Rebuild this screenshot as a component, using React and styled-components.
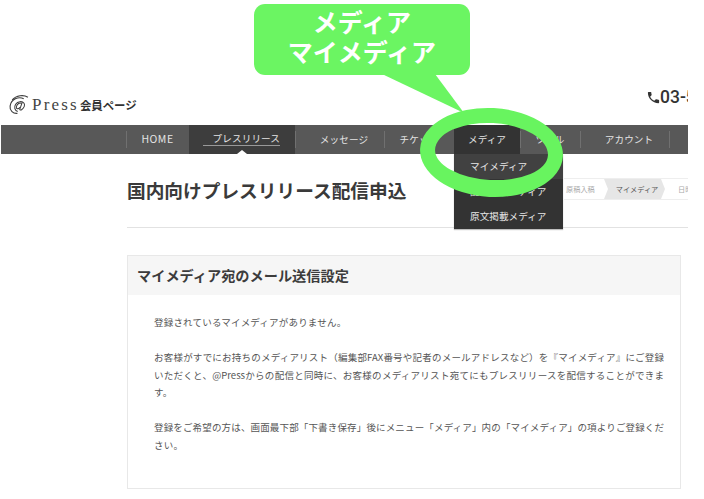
import React from 'react';
import styled, { createGlobalStyle } from 'styled-components';
import { MdLocalPhone } from 'react-icons/md';

const GlobalStyle = createGlobalStyle`
  html, body {
    margin: 0;
    padding: 0;
    background: #fff;
  }
  body {
    font-family: "Noto Sans CJK JP", "Noto Sans", sans-serif;
  }
`;

const Stage = styled.div`
  position: relative;
  width: 704px;
  height: 499px;
  overflow: hidden;
`;

const Page = styled.div`
  position: relative;
  width: 688px;
  height: 499px;
  overflow: hidden;
  padding-top: 88px;
  box-sizing: border-box;
`;

const Header = styled.header`
  height: 37px;
  display: flex;
  align-items: flex-start;
  justify-content: space-between;
  padding-left: 8px;
`;

const Logo = styled.div`
  display: flex;
  align-items: center;
  height: 34px;
`;

const LogoWord = styled.span`
  font-family: "Liberation Serif", serif;
  font-size: 17px;
  letter-spacing: 2.2px;
  color: #444;
  margin-left: 2px;
`;

const LogoNote = styled.span`
  font-size: 11.4px;
  font-weight: 700;
  color: #333;
  margin-left: 1px;
`;

const Phone = styled.div`
  display: flex;
  align-items: center;
  font-family: Roboto, sans-serif;
  font-size: 17.5px;
  font-weight: 500;
  color: #333;
  white-space: nowrap;
  width: 41px;
  flex: none;
  line-height: 18px;
`;

const PhoneIcon = styled(MdLocalPhone)`
  flex: none;
  width: 15px;
  height: 15px;
  margin: 0 -1px 0 -1px;
`;

const Nav = styled.nav`
  height: 29px;
  margin-left: 1px;
  background: #585858;
  display: flex;
  padding-left: 125px;
`;

const NavItem = styled.div`
  position: relative;
  width: ${(p) => p.$w}px;
  flex: none;
  box-sizing: border-box;
  display: flex;
  align-items: center;
  justify-content: center;
  padding: 0 0 2px ${(p) => p.$shift || 0}px;
  font-size: 9.6px;
  letter-spacing: 0.1px;
  color: #e4e4e4;
  background: ${(p) => p.$bg || 'transparent'};
  &::before {
    content: '';
    display: ${(p) => (p.$bg ? 'none' : 'block')};
    position: absolute;
    left: 0;
    top: 6px;
    bottom: 6px;
    width: 1px;
    background: #707070;
  }
`;

const HomeLabel = styled.span`
  font-size: 10.5px;
  letter-spacing: 0.5px;
`;

const ActiveLabel = styled.span`
  display: block;
  width: 77px;
  margin-right: 1px;
  text-align: right;
  border-bottom: 1px solid #999;
  line-height: 13px;
  padding-top: 1px;
`;

const Caret = styled.span`
  position: absolute;
  left: 50%;
  bottom: 0;
  margin-left: -5px;
  border: 5px solid transparent;
  border-top: 0;
  border-bottom: 4px solid #fff;
`;

const Dropdown = styled.ul`
  position: absolute;
  left: 454px;
  top: 154px;
  width: 109px;
  margin: 0;
  padding: 0;
  list-style: none;
  background: #333;
  box-shadow: 0 1px 1px rgba(0, 0, 0, 0.25);
`;

const DropItem = styled.li`
  height: 25px;
  line-height: 24px;
  padding-left: 16px;
  font-size: 9.6px;
  letter-spacing: 0.05px;
  color: #e8e8e8;
  background: ${(p) => (p.$current ? '#414141' : 'transparent')};
`;

const Main = styled.main`
  padding-left: 127px;
`;

const TitleRow = styled.div`
  height: 74px;
  box-sizing: border-box;
  border-bottom: 1px solid #e2e2e2;
  display: flex;
  align-items: flex-start;
  justify-content: space-between;
  padding-top: 23px;
`;

const Title = styled.h1`
  margin: 0;
  font-size: 18.7px;
  font-weight: 700;
  line-height: 26px;
  color: #3a3a3a;
  white-space: nowrap;
`;

const Steps = styled.div`
  display: flex;
  flex: none;
  width: 124px;
  height: 22px;
  margin-top: 1px;
  box-sizing: border-box;
  border-top: 1px solid #eee;
  border-bottom: 1px solid #eee;
  overflow: hidden;
`;

const Step = styled.div`
  flex: none;
  width: ${(p) => p.$w}px;
  box-sizing: border-box;
  padding-left: ${(p) => p.$pad || 0}px;
  font-size: 7.2px;
  line-height: 20px;
  text-align: ${(p) => (p.$on ? 'center' : 'left')};
  white-space: nowrap;
  color: ${(p) => (p.$on ? '#555' : '#aaa')};
  background: ${(p) => (p.$on ? '#e6e6e6' : 'transparent')};
  clip-path: ${(p) =>
    p.$on ? 'polygon(0 0, calc(100% - 4px) 0, 100% 50%, calc(100% - 4px) 100%, 0 100%, 4px 50%)' : 'none'};
`;

const Panel = styled.section`
  margin: 27px 7px 0 0;
  height: 234px;
  box-sizing: border-box;
  border: 1px solid #e8e8e8;
`;

const PanelHead = styled.h2`
  margin: 0;
  height: 39px;
  padding-left: 9px;
  background: #f6f6f6;
  font-size: 14.2px;
  font-weight: 700;
  line-height: 38px;
  color: #3c3c3c;
`;

const PanelBody = styled.div`
  padding: 19px 0 0 26px;
`;

const Para = styled.p`
  margin: 0 0 17.5px;
  font-size: 9.5px;
  line-height: 17.5px;
  color: #555;
  letter-spacing: 0.2px;
  white-space: nowrap;
`;

// long lines run to the same right edge in the reference
const FullLine = styled.span`
  display: block;
  width: 510px;
  letter-spacing: 0;
  white-space: normal;
  text-align: justify;
  text-align-last: justify;
`;

const Bubble = styled.div`
  position: absolute;
  left: 254px;
  top: 4px;
  width: 216px;
  height: 71px;
  border-radius: 11px;
  background: #6bf562;
  color: #fff;
  font-size: 25px;
  font-weight: 700;
  line-height: 30px;
  text-align: center;
  padding-top: 2px;
  box-sizing: border-box;
`;

const BubbleTail = styled.svg`
  position: absolute;
  left: 380px;
  top: 74px;
`;

const Ring = styled.div`
  position: absolute;
  left: 420px;
  top: 108px;
  width: 143px;
  height: 89px;
  box-sizing: border-box;
  border: 15px solid #68f45f;
  border-bottom-width: 17px;
  border-radius: 50%;
  transform: rotate(3deg);
`;

const navItems = [
  { label: <HomeLabel>HOME</HomeLabel>, w: 63, key: 'home' },
  { label: 'プレスリリース', w: 106, bg: '#3d3d3d', active: true, key: 'press' },
  { label: 'メッセージ', w: 89, shift: 9, key: 'message' },
  { label: 'チケット', w: 70, key: 'ticket' },
  { label: 'メディア', w: 66, bg: '#333', key: 'media' },
  { label: 'ツール', w: 60, key: 'tool' },
  { label: 'アカウント', w: 89, shift: 9, key: 'account' },
  { label: '', w: 19, key: 'end' },
];

const dropItems = ['マイメディア', '配信実績メディア', '原文掲載メディア'];

function AtMark() {
  return (
    <svg width="22" height="22" viewBox="0 0 21 21" fill="none" stroke="#3f3f3f">
      <path d="M15 4.500C10 2 3 5 2 11.500c-.6 4.500 3 7.500 7 7" strokeWidth="1.100" />
      <path d="M4 5.500C8 1 15 .5 19 3" strokeWidth="1.100" />
      <path d="M13.500 8.200l-2.200 6.200c-.3 1 .8 1.200 1.700.6 2.300-1.500 3.500-4.300 2.300-6.200-1.600-2.300-6-2-8 1-1.700 2.600-1 6 2 6.800" strokeWidth="1" />
      <path d="M13 9.200c-1.500-1.600-4.500.2-5 3-.4 2.200 1.800 2.700 3.300.6" strokeWidth="1" />
    </svg>
  );
}

export default function App() {
  return (
    <Stage>
      <GlobalStyle />
      <Page>
        <Header>
          <Logo>
            <AtMark />
            <LogoWord>Press</LogoWord>
            <LogoNote>会員ページ</LogoNote>
          </Logo>
          <Phone>
            <PhoneIcon />
            03-5
          </Phone>
        </Header>
        <Nav>
          {navItems.map((item) => (
            <NavItem key={item.key} $w={item.w} $bg={item.bg} $shift={item.shift}>
              {item.active ? <ActiveLabel>{item.label}</ActiveLabel> : item.label}
              {item.active && <Caret />}
            </NavItem>
          ))}
        </Nav>
        <Main>
          <TitleRow>
            <Title>国内向けプレスリリース配信申込</Title>
            <Steps>
              <Step $w={40} $pad={2}>原稿入稿</Step>
              <Step $w={61} $on $pad={5}>マイメディア</Step>
              <Step $w={40} $pad={13}>日時</Step>
            </Steps>
          </TitleRow>
          <Panel>
            <PanelHead>マイメディア宛のメール送信設定</PanelHead>
            <PanelBody>
              <Para>登録されているマイメディアがありません。</Para>
              <Para>
                <FullLine>お客様がすでにお持ちのメディアリスト（編集部FAX番号や記者のメールアドレスなど）を『マイメディア』にご登録</FullLine>
                <FullLine>いただくと、@Pressからの配信と同時に、お客様のメディアリスト宛てにもプレスリリースを配信することができま</FullLine>
                す。
              </Para>
              <Para>
                <FullLine>登録をご希望の方は、画面最下部「下書き保存」後にメニュー「メディア」内の「マイメディア」の項よりご登録くだ</FullLine>
                さい。
              </Para>
            </PanelBody>
          </Panel>
        </Main>
      </Page>
      <Dropdown>
        {dropItems.map((label, i) => (
          <DropItem key={label} $current={i === 0}>{label}</DropItem>
        ))}
      </Dropdown>
      <BubbleTail width="90" height="42" viewBox="0 0 90 42">
        <polygon points="2,0 55,0 84,39" fill="#6bf562" />
      </BubbleTail>
      <Bubble>
        メディア
        <br />
        マイメディア
      </Bubble>
      <Ring />
    </Stage>
  );
}
